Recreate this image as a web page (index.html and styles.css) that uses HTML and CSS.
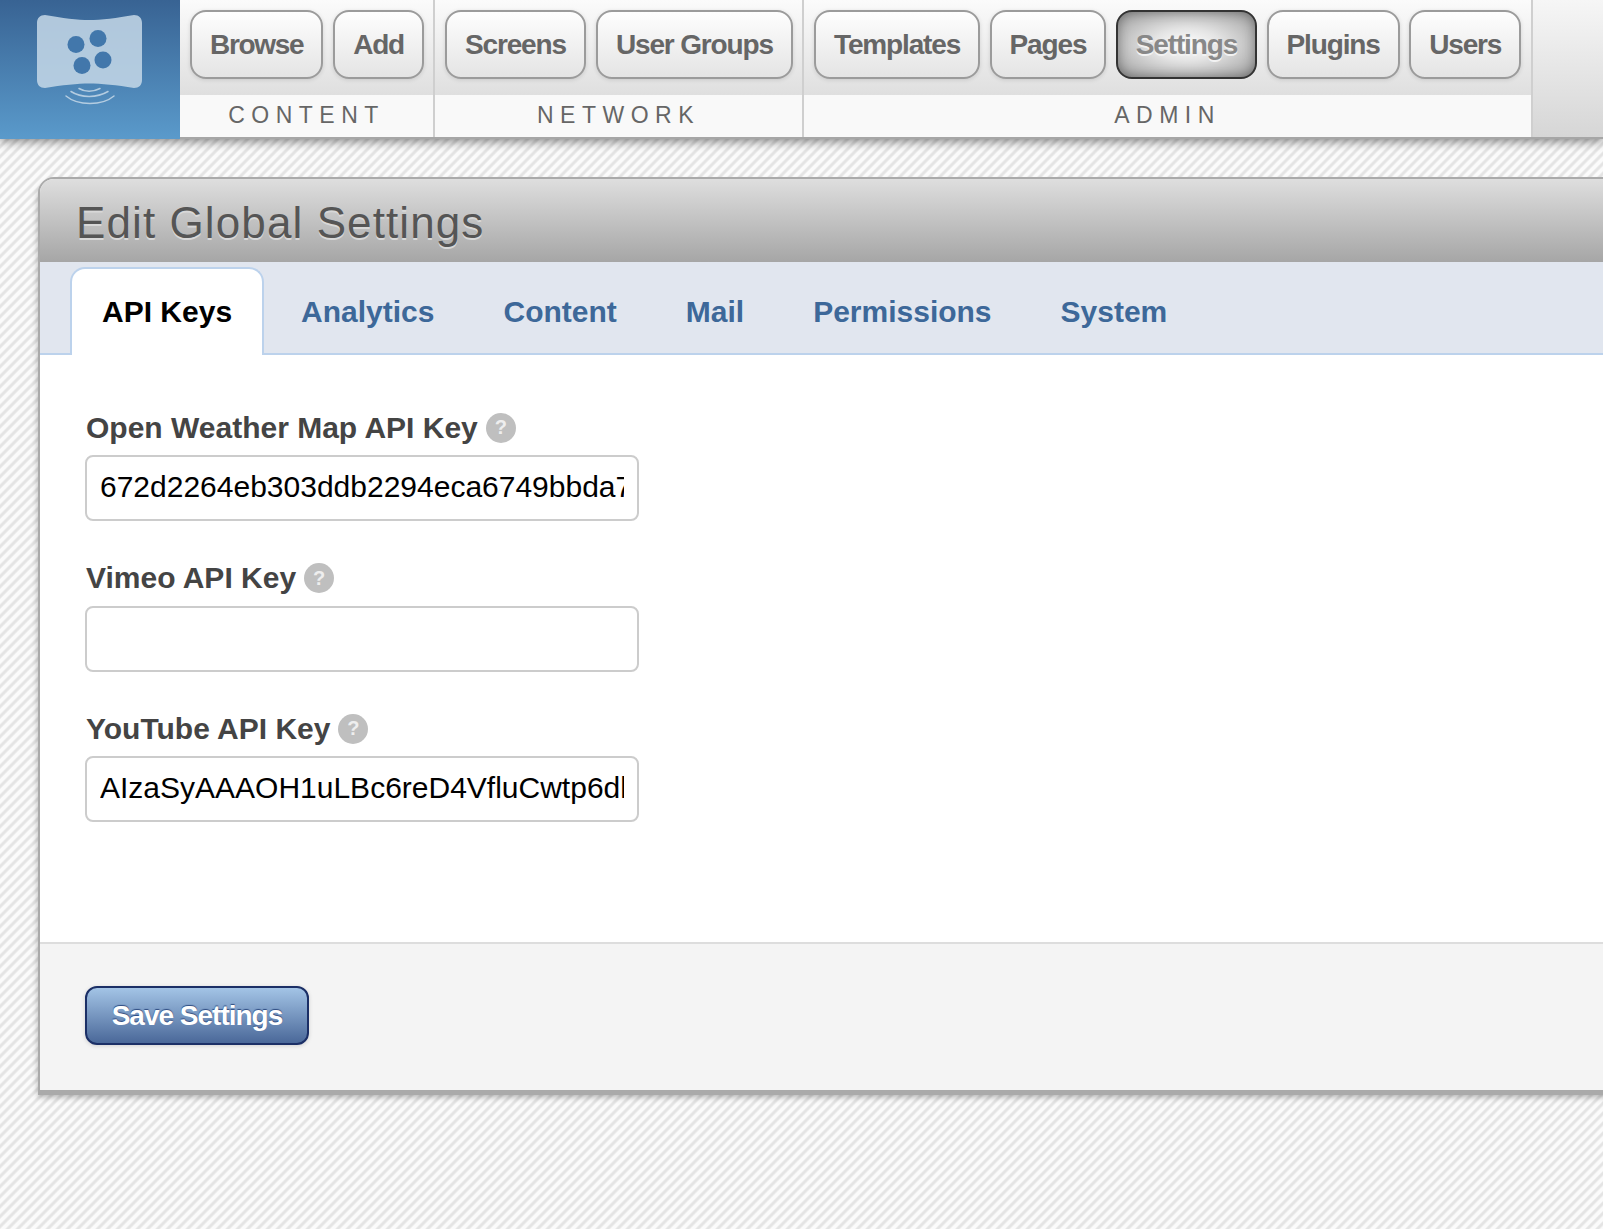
FILE: index.html
```html
<!DOCTYPE html>
<html>
  <head>
    <title>Edit Global Settings</title>
    <link rel="stylesheet" href="styles.css">
  </head>
  <body>
    <div class="top_nav">
      <a class="logo" href="#">
        <svg width="180" height="139" viewBox="0 0 180 139">
          <path d="M45 15 C62 18 78 20 89 20 C101 20 117 18 134 15 C139 15 142 18 142 23 L142 80 C142 85 139 88 134 88 C117 85 101 83.500 89 83.500 C78 83.500 62 85 45 88 C40 88 37 85 37 80 L37 23 C37 18 40 15 45 15 Z" fill="#c6d8e8" fill-opacity="0.85"/>
          <circle cx="76" cy="44.500" r="8.500" fill="#4277ab"/>
          <circle cx="98" cy="38.500" r="8.500" fill="#4277ab"/>
          <circle cx="103" cy="60" r="8.500" fill="#4277ab"/>
          <circle cx="82" cy="65.500" r="8.500" fill="#4277ab"/>
          <g fill="none" stroke="#c6d8e8" stroke-opacity="0.85" stroke-width="1.500" stroke-linecap="round">
            <path d="M79 88.500 C85 92 93 92 100 88.500"/>
            <path d="M71 91.500 C81 98 97 98 108 91.500"/>
            <path d="M66 96 C78 106 102 106 114 96"/>
          </g>
        </svg>
      </a>
      <div class="nav_group group_content">
        <div class="nav_buttons">
          <a class="nav_btn" href="#">Browse</a>
          <a class="nav_btn" href="#">Add</a>
        </div>
        <div class="nav_label">CONTENT</div>
      </div>
      <div class="nav_group group_network">
        <div class="nav_buttons">
          <a class="nav_btn" href="#">Screens</a>
          <a class="nav_btn" href="#">User Groups</a>
        </div>
        <div class="nav_label">NETWORK</div>
      </div>
      <div class="nav_group group_admin">
        <div class="nav_buttons">
          <a class="nav_btn" href="#">Templates</a>
          <a class="nav_btn" href="#">Pages</a>
          <a class="nav_btn active" href="#">Settings</a>
          <a class="nav_btn" href="#">Plugins</a>
          <a class="nav_btn" href="#">Users</a>
        </div>
        <div class="nav_label">ADMIN</div>
      </div>
    </div>

    <div class="panel">
      <h1 class="panel_title">Edit Global Settings</h1>
      <ul class="tabs">
        <li class="tab selected"><a href="#">API Keys</a></li>
        <li class="tab"><a href="#">Analytics</a></li>
        <li class="tab"><a href="#">Content</a></li>
        <li class="tab"><a href="#">Mail</a></li>
        <li class="tab"><a href="#">Permissions</a></li>
        <li class="tab"><a href="#">System</a></li>
      </ul>
      <form class="settings_form">
        <div class="field">
          <label class="field_label">Open Weather Map API Key <span class="help">?</span></label>
          <input class="text_input" type="text" value="672d2264eb303ddb2294eca6749bbda7a1">
        </div>
        <div class="field">
          <label class="field_label">Vimeo API Key <span class="help">?</span></label>
          <input class="text_input" type="text" value="">
        </div>
        <div class="field">
          <label class="field_label">YouTube API Key <span class="help">?</span></label>
          <input class="text_input" type="text" value="AIzaSyAAAOH1uLBc6reD4VfluCwtp6dlq8mZk0">
        </div>
      </form>
      <div class="panel_footer">
        <button class="save_btn" type="button">Save Settings</button>
      </div>
    </div>
  </body>
</html>
```

FILE: styles.css
```css
html {
  background-color: #f6f6f6;
}
body {
  margin: 0;
  min-height: 1229px;
  overflow-x: hidden;
  font-family: "Liberation Sans", Arial, sans-serif;
  background-color: #f7f7f7;
  background-image: repeating-linear-gradient(135deg, #fbfbfb 0, #fbfbfb 2.500px, #e4e4e4 4px, #e4e4e4 5.500px, #fbfbfb 7.070px);
}
a {
  text-decoration: none;
}

/* top navigation */
.top_nav {
  display: flex;
  height: 137px;
  border-bottom: 2px solid #a6a6a6;
  background: linear-gradient(to bottom, #f6f6f6, #d6d6d6);
  box-shadow: 0 2px 10px rgba(0, 0, 0, 0.5);
  position: relative;
}
.logo {
  display: block;
  flex: 0 0 180px;
  height: 139px;
  background: linear-gradient(to bottom, #386393, #5a9acb);
}
.logo svg {
  display: block;
}
.nav_group {
  display: flex;
  flex-direction: column;
  border-right: 2px solid #cfcfcf;
}
.group_content {
  width: 253px;
}
.group_network {
  width: 367px;
}
.group_admin {
  width: 727px;
}
.nav_buttons {
  display: flex;
  gap: 10px;
  height: 95px;
  padding: 10px 0 0 10px;
  box-sizing: border-box;
  background: linear-gradient(to bottom, #fbfbfb, #dfdfdf);
}
.group_admin .nav_buttons {
  gap: 9.500px;
}
.nav_btn {
  display: flex;
  align-items: center;
  justify-content: center;
  box-sizing: border-box;
  height: 69px;
  padding: 0 18px;
  border: 2px solid #9b9b9b;
  border-radius: 16px;
  background: linear-gradient(to bottom, #fefefe, #e4e4e4);
  box-shadow: 0 1px 4px rgba(0, 0, 0, 0.12);
  color: #666;
  font-size: 28px;
  font-weight: bold;
  letter-spacing: -1.150px;
  white-space: nowrap;
}
.group_content .nav_btn {
  letter-spacing: -1.300px;
}
.nav_btn.active {
  border-color: #333;
  background: radial-gradient(ellipse at center, #fff 0, #e4e4e4 35%, #9a9a9a 100%);
  box-shadow: inset 0 0 12px rgba(0, 0, 0, 0.35);
  color: #888;
  text-shadow: 0 2px 0 #f2f2f2;
}
.nav_label {
  flex: 1;
  display: flex;
  align-items: center;
  justify-content: center;
  padding-bottom: 2px;
  background-color: #f9f9f9;
  color: #666;
  font-size: 23px;
  letter-spacing: 6.500px;
}

/* settings panel */
.panel {
  width: 1700px;
  margin: 38px 0 0 38px;
  border: 2px solid #aaa;
  border-radius: 16px 0 0 0;
  box-shadow: 0 3px 0 #aaa, 0 5px 6px rgba(0, 0, 0, 0.3);
  background-color: #fff;
}
.panel_title {
  height: 83px;
  margin: 0;
  padding: 0 0 0 36px;
  box-sizing: border-box;
  border-radius: 14px 0 0 0;
  background: linear-gradient(to bottom, #dedede, #a6a6a6);
  color: #555;
  font-size: 44px;
  font-weight: normal;
  line-height: 88px;
  letter-spacing: 1.100px;
  text-shadow: 0 2px 0 #d8d8d8;
}
.tabs {
  display: flex;
  gap: 5px;
  height: 93px;
  margin: 0;
  padding: 5px 0 0 30px;
  box-sizing: border-box;
  list-style: none;
  background-color: #e1e6ef;
  border-bottom: 2px solid #bcd2ec;
}
.tab {
  box-sizing: border-box;
  height: 88px;
  padding: 0 30px;
  border: 2px solid transparent;
  border-bottom: 0;
  font-size: 30px;
  font-weight: bold;
  line-height: 86px;
}
.tab a {
  color: #3d6899;
}
.tab.selected {
  border-color: #bcd2ec;
  border-radius: 15px 15px 0 0;
  background-color: #fff;
}
.tab.selected a {
  color: #000;
}

.settings_form {
  display: flex;
  flex-direction: column;
  gap: 37.500px;
  height: 587px;
  padding: 53px 0 0 45px;
  box-sizing: border-box;
}
.field {
  display: flex;
  flex-direction: column;
  gap: 8px;
}
.field_label {
  display: flex;
  align-items: center;
  gap: 8px;
  height: 39px;
  padding-left: 1px;
  color: #444;
  font-size: 30px;
  font-weight: bold;
}
.help {
  display: flex;
  align-items: center;
  justify-content: center;
  width: 30px;
  height: 30px;
  border-radius: 50%;
  background-color: #bfbfbf;
  color: #eee;
  font-size: 20px;
}
.text_input {
  box-sizing: border-box;
  width: 554px;
  height: 66px;
  padding: 0 13px 2px;
  border: 2px solid #ccc;
  border-radius: 8px;
  color: #000;
  font-family: "Liberation Sans", Arial, sans-serif;
  font-size: 30px;
  outline: none;
}
.panel_footer {
  height: 148px;
  padding: 42px 0 0 45px;
  box-sizing: border-box;
  border-top: 2px solid #ddd;
  background-color: #f4f4f4;
}
.save_btn {
  display: block;
  width: 224px;
  height: 59px;
  padding: 0;
  border: 2px solid #1b2f66;
  border-radius: 12px;
  background: linear-gradient(to bottom, #a3c4e6, #4a6899);
  box-shadow: 0 1px 4px rgba(0, 0, 0, 0.15);
  color: #fff;
  font-family: "Liberation Sans", Arial, sans-serif;
  font-size: 28px;
  font-weight: bold;
  letter-spacing: -1px;
  text-shadow: 0 -1px 1px #2c4a80;
}
```
